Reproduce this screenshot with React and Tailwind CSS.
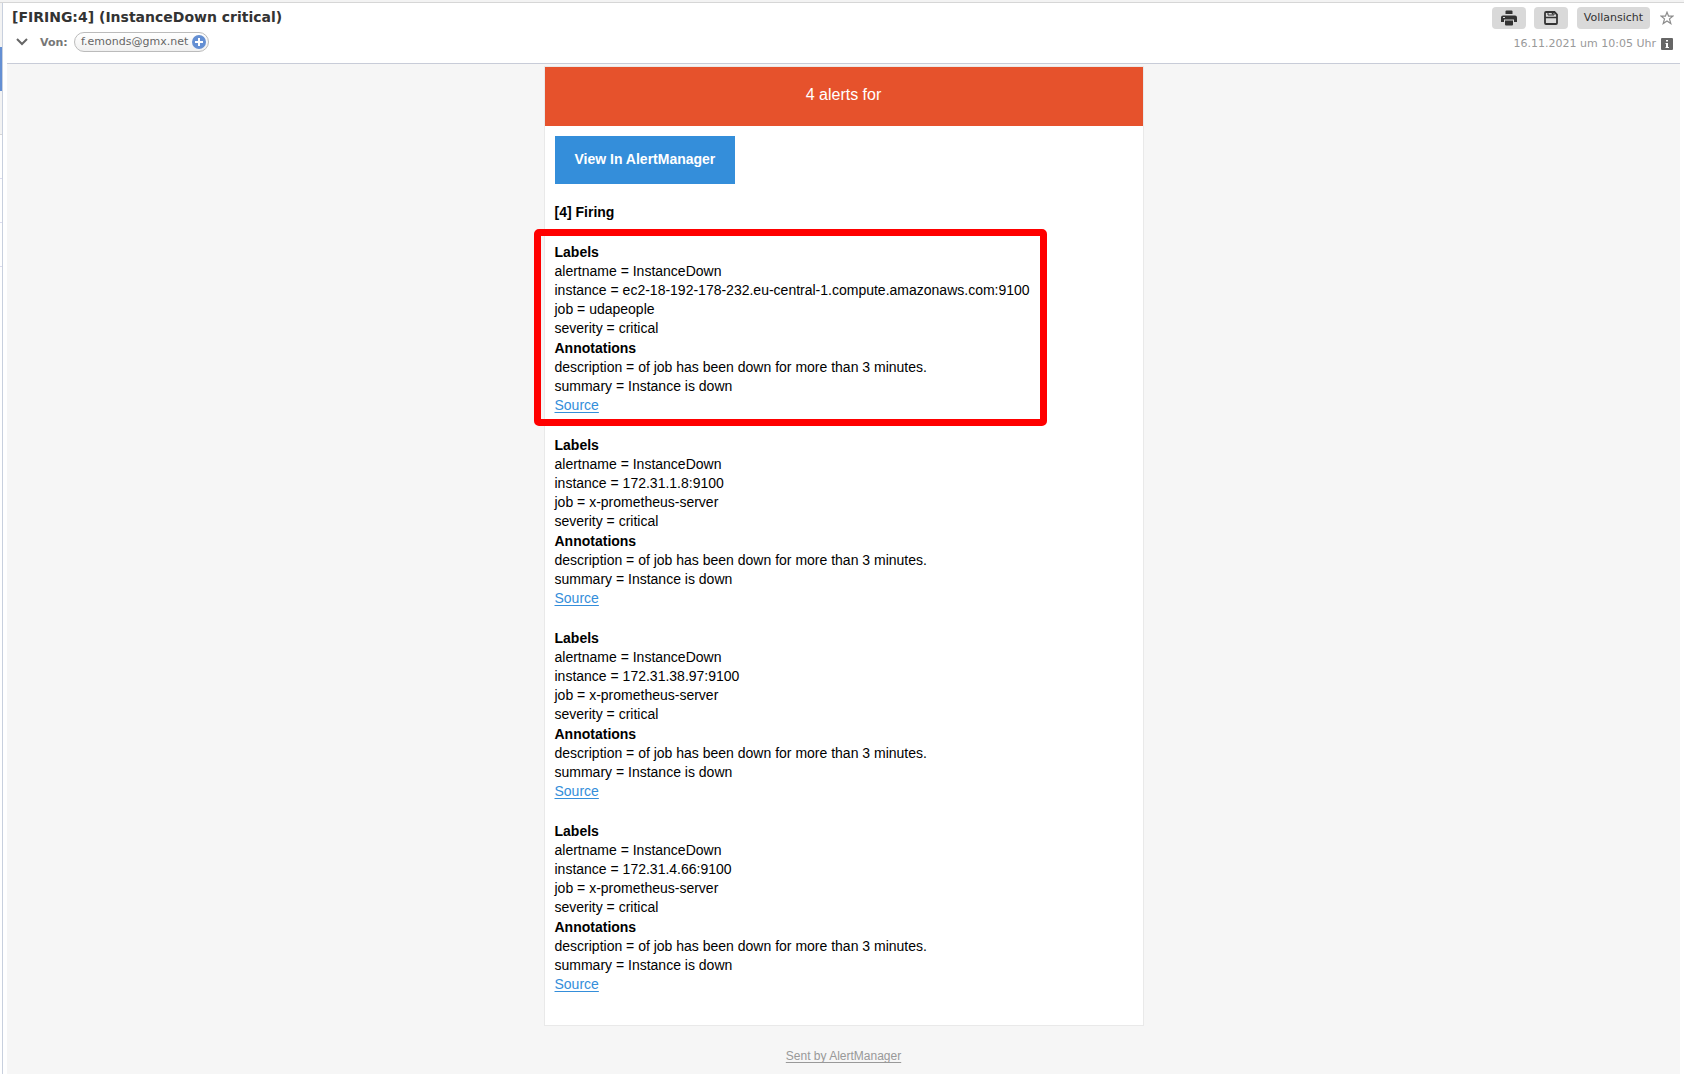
const alerts = [
  { instance: 'ec2-18-192-178-232.eu-central-1.compute.amazonaws.com:9100', job: 'udapeople', marked: true },
  { instance: '172.31.1.8:9100', job: 'x-prometheus-server' },
  { instance: '172.31.38.97:9100', job: 'x-prometheus-server' },
  { instance: '172.31.4.66:9100', job: 'x-prometheus-server' },
];

function PrinterIcon() {
  return (
    <svg width="16" height="16" viewBox="0 0 16 16" aria-hidden="true">
      <path fill="#333" d="M4.500 1.500Q4.500.5 5.500.5h5q1 0 1 1V4h-7z" />
      <path fill="#333" d="M2 5.500h12q2 0 2 2V12h-3V9.500H3V12H0V7.500q0-2 2-2z" />
      <path fill="#333" d="M4 10.500h8V14.500q0 1-1 1H5q-1 0-1-1z" />
      <rect x="2" y="7" width="2" height="1" fill="#d9d9d9" />
    </svg>
  );
}

function DiskIcon() {
  return (
    <svg width="14" height="14" viewBox="0 0 14 14" fill="none" stroke="#333" strokeWidth="1.800" aria-hidden="true">
      <path d="M2 1h8.500L13 3.500V12q0 1-1 1H2q-1 0-1-1V2q0-1 1-1z" />
      <path d="M1 6.500h12" strokeWidth="1.500" />
      <path d="M4 1v3h6V1" strokeWidth="1" />
      <path d="M8.500 1v2.500" strokeWidth="1.500" />
    </svg>
  );
}

function StarIcon() {
  return (
    <svg width="14" height="14" viewBox="0 0 14 14" fill="none" stroke="#8c8c8c" strokeWidth="1.200" aria-hidden="true">
      <path d="M7 1.200l1.600 4h4.200L9.500 7.900l1.300 4.600L7 9.900l-3.800 2.600 1.300-4.600L1.200 5.200h4.200z" />
    </svg>
  );
}

function MailHeader() {
  return (
    <header className="flex h-[60px] justify-between pl-[5px] pr-1.5 font-['DejaVu_Sans',sans-serif]">
      <div>
        <h1 className="mt-1 text-[14px] leading-5 font-bold text-[#333]">[FIRING:4] (InstanceDown critical)</h1>
        <div className="mt-[5px] flex h-5 items-center">
          <button aria-label="Details" className="flex w-7 pl-1">
            <svg width="12" height="8" viewBox="0 0 12 8" fill="none" stroke="#666" strokeWidth="2" aria-hidden="true">
              <path d="M1 1l5 5 5-5" />
            </svg>
          </button>
          <span className="w-[34px] pt-0.5 text-[11px] leading-5 font-bold text-[#777]">Von:</span>
          <button className="flex h-5 items-center gap-1 rounded-full border border-[#bbb] bg-linear-to-b from-white to-[#f0f0f0] pr-0.5 pl-1.5 text-[11px] text-[#666]">
            f.emonds@gmx.net
            <svg width="14" height="14" viewBox="0 0 14 14" aria-hidden="true">
              <circle cx="7" cy="7" r="7" fill="#648fd3" />
              <path d="M7 3v8M3 7h8" stroke="#fff" strokeWidth="2" />
            </svg>
          </button>
        </div>
      </div>
      <div className="flex flex-col items-end pt-1">
        <div className="flex h-[22px] items-center">
          <button aria-label="Drucken" className="mr-2 flex h-[22px] w-[34px] items-center justify-center rounded bg-[#d9d9d9]">
            <PrinterIcon />
          </button>
          <button aria-label="Speichern" className="mr-[9px] flex h-[22px] w-[34px] items-center justify-center rounded bg-[#d9d9d9]">
            <DiskIcon />
          </button>
          <button className="mr-[10px] h-[22px] w-[73px] rounded bg-[#d9d9d9] text-[11px] leading-[22px] text-[#333]">Vollansicht</button>
          <button aria-label="Markieren">
            <StarIcon />
          </button>
        </div>
        <div className="mt-2 flex items-center gap-[5px] pr-px text-[11px] leading-[14px] text-[#999]">
          <time>16.11.2021 um 10:05 Uhr</time>
          <svg width="12" height="12" viewBox="0 0 12 12" aria-hidden="true">
            <rect width="12" height="12" rx="1" fill="#666" />
            <path d="M5 2h2v1.500H5zM4.500 5H7v4h1v1H4.500V9H5V6h-.5z" fill="#fff" />
          </svg>
        </div>
      </div>
    </header>
  );
}

function Alert({ instance, job, marked }) {
  return (
    <section className="relative">
      <h2 className="font-bold">Labels</h2>
      <p>alertname = InstanceDown</p>
      <p>instance = {instance}</p>
      <p>job = {job}</p>
      <p>severity = critical</p>
      <h2 className="pt-px font-bold">Annotations</h2>
      <p>description = of job has been down for more than 3 minutes.</p>
      <p>summary = Instance is down</p>
      <p>
        <a href="#source" className="text-[#348eda] underline underline-offset-2">Source</a>
      </p>
      {marked && (
        <div className="pointer-events-none absolute -top-[14px] -bottom-[11px] -left-[21px] w-[513px] rounded-[5px] border-[7px] border-[#f00]" />
      )}
    </section>
  );
}

export default function App() {
  return (
    <div className="flex min-h-screen flex-col bg-white">
      <div className="h-[3px] border-b border-[#d6d6d6] bg-[#f3f3f3]" />
      <div className="flex flex-1">
        <aside className="w-[3px] border-r border-[#c8d0de]">
          <div className="h-11 bg-[#f3f3f3]" />
          <div className="h-11 bg-[#648fd3]" />
          <div className="h-11 border-b border-[#d6d6d6] bg-[#f3f3f3]" />
          <div className="h-11 border-b border-[#dcdcee]" />
          <div className="h-11 border-b border-[#dcdcee]" />
          <div className="h-11 border-b border-[#dcdcee]" />
        </aside>
        <div className="flex flex-1 flex-col pr-1 pl-1">
          <MailHeader />
          <main className="flex-1 border-t border-[#c8ccd8] bg-[#f6f6f6] pt-0.5 font-['Liberation_Sans',sans-serif] text-[14px] leading-[19px] text-black">
            <div className="mx-auto max-w-[600px] border border-[#e9e9e9] bg-white">
              <div className="bg-[#e6522c] pt-[18px] pb-[22px] text-center text-[16px] text-white">4 alerts for</div>
              <div className="px-[10px] pt-[10px] pb-[31px]">
                <a href="#alertmanager" className="inline-flex h-12 items-center bg-[#348eda] px-5 pb-0.5 font-bold text-white">
                  View In AlertManager
                </a>
                <h2 className="mt-[19px] mb-[21px] font-bold">[4] Firing</h2>
                <div className="flex flex-col gap-[21px]">
                  {alerts.map((alert) => (
                    <Alert key={alert.instance} {...alert} />
                  ))}
                </div>
              </div>
            </div>
            <footer className="pt-[21px] text-center text-[12px] text-[#999]">
              <a href="#sent" className="underline underline-offset-2">Sent by AlertManager</a>
            </footer>
          </main>
        </div>
      </div>
    </div>
  );
}
